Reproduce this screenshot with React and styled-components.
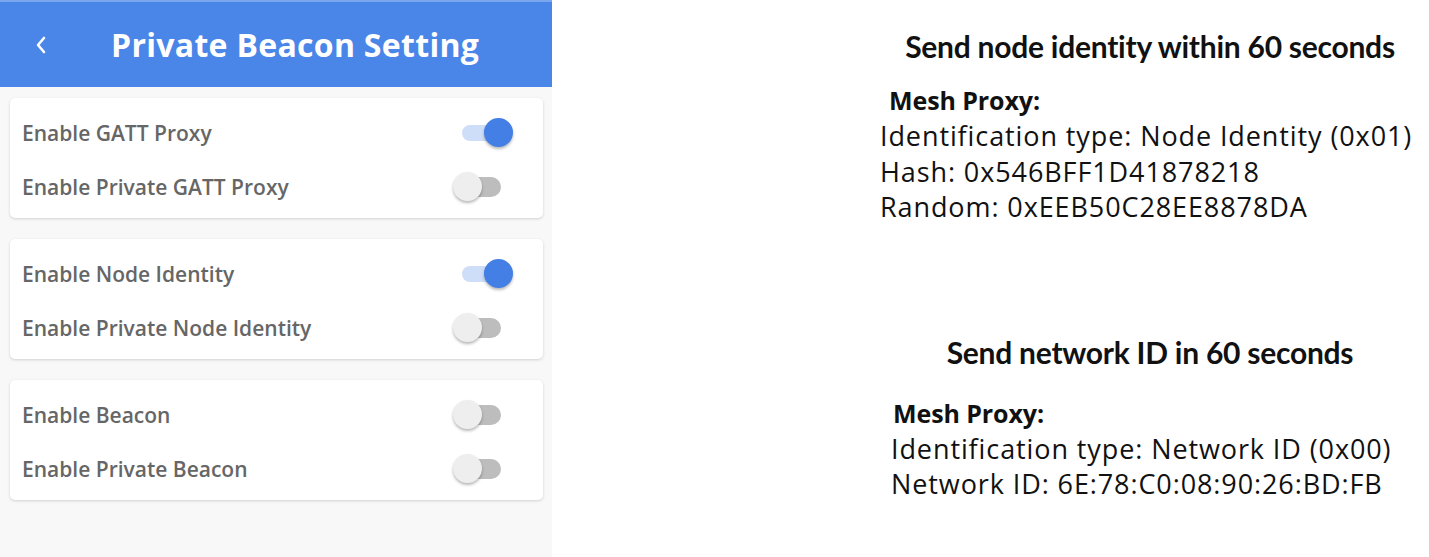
import React from "react";
import styled, { createGlobalStyle } from "styled-components";

const GlobalStyle = createGlobalStyle`
  html, body {
    margin: 0;
    padding: 0;
    background: #ffffff;
  }
  * {
    box-sizing: border-box;
  }
`;

const Page = styled.div`
  display: flex;
  width: 1429px;
  height: 557px;
  overflow: hidden;
`;

const Phone = styled.div`
  display: flex;
  flex-direction: column;
  width: 552px;
  height: 100%;
  background-color: #f8f8f8;
`;

const Header = styled.div`
  display: flex;
  align-items: center;
  height: 87px;
  padding-left: 34px;
  background-color: #4a86e8;
  border-top: 2px solid #7aa6ee;
`;

const BackBtn = styled.div`
  display: flex;
  align-items: center;
  width: 77px;
  height: 100%;
`;

const Title = styled.span`
  font-family: "Open Sans", sans-serif;
  font-weight: 700;
  font-size: 32px;
  color: white;
  letter-spacing: 0.3px;
`;

const CardList = styled.div`
  display: flex;
  flex-direction: column;
  gap: 21px;
  padding: 11px 9px 0 10px;
`;

const Card = styled.div`
  display: flex;
  flex-direction: column;
  height: 120px;
  padding: 8px 0 4px 0;
  background-color: white;
  border-radius: 5px;
  box-shadow: 0 1px 3px rgba(0, 0, 0, 0.16);
`;

const Row = styled.div`
  display: flex;
  align-items: center;
  justify-content: space-between;
  height: 54px;
  padding: 0 30px 0 12px;
`;

const Label = styled.span`
  font-family: "Open Sans", sans-serif;
  font-weight: 600;
  font-size: 21px;
  color: #666666;
`;

const SwitchBox = styled.div`
  position: relative;
  width: 60px;
  height: 30px;
`;

const Track = styled.div`
  position: absolute;
  left: 9px;
  top: ${(p) => (p.on ? "7px" : "5px")};
  width: 39px;
  height: ${(p) => (p.on ? "16px" : "20px")};
  border-radius: 10px;
  background-color: ${(p) => (p.on ? "#cfdef8" : "#bdbdbd")};
`;

const Thumb = styled.div`
  position: absolute;
  top: 0;
  left: ${(p) => (p.on ? "31px" : "0")};
  width: 29px;
  height: 29px;
  border-radius: 50%;
  background-color: ${(p) => (p.on ? "#437fe4" : "#eeeeee")};
  box-shadow: 0 2px 3px rgba(0, 0, 0, 0.28);
`;

const Info = styled.div`
  display: flex;
  flex-direction: column;
  width: 540px;
  margin-left: 328px;
  padding-top: 26px;
`;

const Heading = styled.div`
  font-family: "Lato", sans-serif;
  font-weight: 700;
  font-size: 30px;
  line-height: 40px;
  color: #111111;
  text-align: center;
  letter-spacing: -0.25px;
  margin-bottom: ${(p) => p.gap}px;
`;

const Block = styled.div`
  display: flex;
  flex-direction: column;
  padding-left: ${(p) => p.indent}px;
  margin-bottom: ${(p) => p.after}px;
`;

const BlockTitle = styled.div`
  font-family: "Open Sans", sans-serif;
  font-weight: 700;
  font-size: 25px;
  line-height: 36px;
  color: #111111;
  letter-spacing: -0.1px;
  padding-left: ${(p) => p.shift}px;
`;

const Line = styled.div`
  font-family: "Open Sans", sans-serif;
  font-weight: 400;
  font-size: 27px;
  line-height: 35.5px;
  color: #111111;
  letter-spacing: 0.9px;
  white-space: nowrap;
`;

function Switch({ on }) {
  return (
    <SwitchBox>
      <Track on={on ? 1 : 0} />
      <Thumb on={on ? 1 : 0} />
    </SwitchBox>
  );
}

const groups = [
  [
    { label: "Enable GATT Proxy", on: true },
    { label: "Enable Private GATT Proxy", on: false },
  ],
  [
    { label: "Enable Node Identity", on: true },
    { label: "Enable Private Node Identity", on: false },
  ],
  [
    { label: "Enable Beacon", on: false },
    { label: "Enable Private Beacon", on: false },
  ],
];

export default function App() {
  return (
    <>
      <GlobalStyle />
      <Page>
        <Phone>
          <Header>
            <BackBtn>
              <svg width="14" height="20" viewBox="0 0 14 20">
                <path
                  d="M10 3 L4 10 L10 17"
                  fill="none"
                  stroke="white"
                  strokeWidth="2.6"
                  strokeLinecap="round"
                  strokeLinejoin="round"
                />
              </svg>
            </BackBtn>
            <Title>Private Beacon Setting</Title>
          </Header>
          <CardList>
            {groups.map((g, i) => (
              <Card key={i}>
                {g.map((r) => (
                  <Row key={r.label}>
                    <Label>{r.label}</Label>
                    <Switch on={r.on} />
                  </Row>
                ))}
              </Card>
            ))}
          </CardList>
        </Phone>
        <Info>
          <Heading gap={16}>Send node identity within 60 seconds</Heading>
          <Block indent={0} after={107}>
            <BlockTitle shift={9}>Mesh Proxy:</BlockTitle>
            <Line>Identification type: Node Identity (0x01)</Line>
            <Line>Hash: 0x546BFF1D41878218</Line>
            <Line>Random: 0xEEB50C28EE8878DA</Line>
          </Block>
          <Heading gap={23}>Send network ID in 60 seconds</Heading>
          <Block indent={11} after={0}>
            <BlockTitle shift={2}>Mesh Proxy:</BlockTitle>
            <Line>Identification type: Network ID (0x00)</Line>
            <Line>Network ID: 6E:78:C0:08:90:26:BD:FB</Line>
          </Block>
        </Info>
      </Page>
    </>
  );
}
